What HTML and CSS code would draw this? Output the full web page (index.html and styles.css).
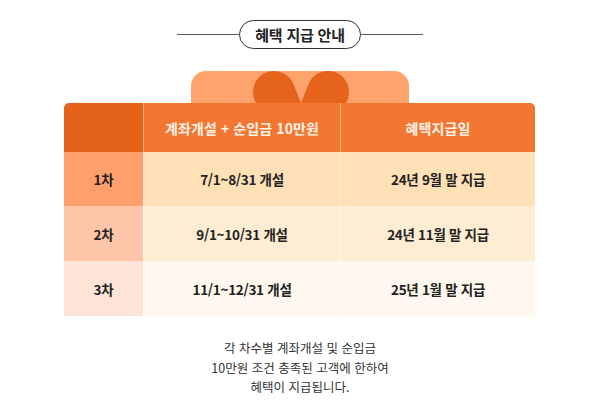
FILE: index.html
```html
<!DOCTYPE html>
<html lang="ko">
<head>
<meta charset="utf-8">
<title>혜택 지급 안내</title>
<link rel="stylesheet" href="styles.css">
</head>
<body>
<div class="page">
  <div class="title-row">
    <span class="rule"></span>
    <h1 class="pill">혜택 지급 안내</h1>
    <span class="rule"></span>
  </div>
  <div class="gift">
    <svg class="ribbon" width="471" height="32" viewBox="0 0 471 32" aria-hidden="true">
      <rect x="127" y="0" width="218" height="60" rx="15" fill="#FFA36D"/>
      <path d="M237 32 L229.5 13.2 A21 21 0 1 0 209 42 Z" fill="#E5631A"/>
      <path d="M237 32 L244.5 13.2 A21 21 0 1 1 265 42 Z" fill="#E5631A"/>
    </svg>
    <div class="table">
      <div class="cell head first"></div>
      <div class="cell head">계좌개설 + 순입금 10만원</div>
      <div class="cell head">혜택지급일</div>

      <div class="cell lab r1">1차</div>
      <div class="cell val r1">7/1~8/31 개설</div>
      <div class="cell val r1">24년 9월 말 지급</div>

      <div class="cell lab r2">2차</div>
      <div class="cell val r2">9/1~10/31 개설</div>
      <div class="cell val r2">24년 11월 말 지급</div>

      <div class="cell lab r3">3차</div>
      <div class="cell val r3">11/1~12/31 개설</div>
      <div class="cell val r3">25년 1월 말 지급</div>
    </div>
  </div>
  <p class="note">각 차수별 계좌개설 및 순입금<br>10만원 조건 충족된 고객에 한하여<br>혜택이 지급됩니다.</p>
</div>
</body>
</html>
```
FILE: styles.css
```css
* { box-sizing: border-box; }
html, body {
  margin: 0;
  padding: 0;
  background: #fff;
}
body {
  font-family: "Noto Sans CJK KR", "Noto Sans", sans-serif;
  color: #222;
}
.page {
  width: 600px;
  padding-top: 20px;
}
.title-row {
  display: flex;
  align-items: center;
  justify-content: center;
}
.rule {
  width: 62px;
  height: 1px;
  background: #555;
}
.pill {
  margin: 0;
  width: 122px;
  height: 29px;
  border: 1px solid #333;
  border-radius: 15px;
  display: flex;
  align-items: center;
  justify-content: center;
  font-size: 15px;
  font-weight: 700;
  color: #222;
  letter-spacing: -0.2px;
}
.gift {
  width: 471px;
  margin: 22px 0 0 64px;
}
.ribbon {
  display: block;
}
.table {
  display: grid;
  grid-template-columns: 79px 197px 195px;
  grid-template-rows: 49px 54px 55px 55px;
  border-radius: 5px 5px 0 0;
  overflow: hidden;
}
.cell {
  display: flex;
  align-items: center;
  justify-content: center;
  font-size: 13.5px;
  font-weight: 700;
  letter-spacing: -0.3px;
}
.cell + .cell:not(.first):not(.lab) {
  border-left: 1px solid rgba(255, 255, 255, 0.45);
}
.head {
  background: #F37731;
  color: #FFF1E8;
  font-size: 14px;
  font-weight: 700;
  letter-spacing: 0.1px;
}
.head.first {
  background: #E4621A;
}
.lab { color: #222; }
.val { color: #222; }
.lab.r1 { background: #FFA06C; }
.val.r1 { background: #FFE0B7; }
.lab.r2 { background: #FFC5A8; }
.val.r2 { background: #FFEDD3; }
.lab.r3 { background: #FFE3D6; }
.val.r3 { background: #FFF8EF; }
.note {
  margin: 22px 0 0;
  text-align: center;
  font-size: 12.5px;
  line-height: 19.5px;
  letter-spacing: 0;
  color: #333;
  font-weight: 400;
}
```
